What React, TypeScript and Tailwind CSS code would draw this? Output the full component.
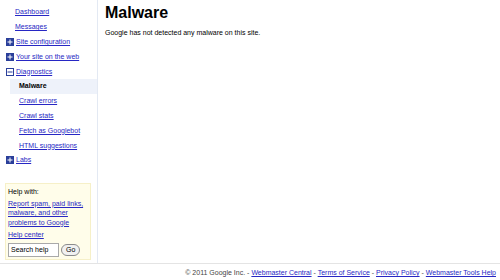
const navTop = [
  { label: "Dashboard" },
  { label: "Messages" },
];

const subItems = ["Crawl errors", "Crawl stats", "Fetch as Googlebot", "HTML suggestions"];

const BoxIcon = ({ open }: { open?: boolean }) => (
  <svg width="8" height="8" viewBox="0 0 8 8" className="shrink-0">
    <rect x="0.5" y="0.5" width="7" height="7" fill={open ? "#ffffff" : "#2a3f9a"} stroke="#2a3f9a" />
    <rect x="1.5" y="3.5" width="5" height="1" fill={open ? "#2a3f9a" : "#ffffff"} />
    {!open && <rect x="3.5" y="1.5" width="1" height="5" fill="#ffffff" />}
  </svg>
);

const Link = ({ children }: { children: React.ReactNode }) => (
  <a className="text-[#2727c4] underline">{children}</a>
);

const App = () => {
  return (
    <div className="w-[500px] h-[280px] bg-white flex flex-col text-[7px] leading-[10px] text-black font-['Liberation_Sans',Arial,sans-serif] overflow-hidden">
      <div className="flex h-[263px]">
        <div className="w-[98px] border-r border-[#e3e9f3] pt-[5px] flex flex-col">
          {navTop.map((n) => (
            <div key={n.label} className="h-[14.8px] flex items-center pl-[15px]">
              <Link>{n.label}</Link>
            </div>
          ))}
          <div className="h-[14.8px] flex items-center pl-[6px] gap-[2px]">
            <BoxIcon />
            <Link>Site configuration</Link>
          </div>
          <div className="h-[14.8px] flex items-center pl-[6px] gap-[2px]">
            <BoxIcon />
            <Link>Your site on the web</Link>
          </div>
          <div className="h-[14.8px] flex items-center pl-[6px] gap-[2px]">
            <BoxIcon open />
            <Link>Diagnostics</Link>
          </div>
          <div className="h-[14.8px] flex items-center ml-[10px] pl-[9px] bg-[#eef2fa] font-bold">
            Malware
          </div>
          {subItems.map((s) => (
            <div key={s} className="h-[14.8px] flex items-center pl-[19px]">
              <Link>{s}</Link>
            </div>
          ))}
          <div className="h-[14.8px] flex items-center pl-[6px] gap-[2px]">
            <BoxIcon />
            <Link>Labs</Link>
          </div>

          <div className="mt-[15px] ml-[5px] w-[86px] bg-[#fffdea] border border-[#f6f0c8] px-[2px] pt-[3px] pb-[2px]">
            <p className="mb-[2px]">Help with:</p>
            <p className="leading-[9.5px]">
              <Link>Report spam, paid links, malware, and other problems to Google</Link>
            </p>
            <p className="mt-[3px] leading-[9.5px]">
              <Link>Help center</Link>
            </p>
            <div className="flex items-center gap-[2px] mt-[3px]">
              <div className="w-[51px] h-[14px] bg-white border border-[#a9a9a9] flex items-center px-[2px] text-[7px]">
                Search help
              </div>
              <div className="h-[12px] px-[4px] rounded-full border border-[#8c8c8c] bg-[#f1f1f1] flex items-center">
                Go
              </div>
            </div>
          </div>
        </div>

        <div className="flex-1 pl-[7px] pt-[4px]">
          <h1 className="text-[16px] leading-[18px] font-bold">Malware</h1>
          <p className="mt-[6px]">Google has not detected any malware on this site.</p>
        </div>
      </div>

      <div className="border-t border-[#e4e4e4] flex-1 pt-[4px] pr-[4px] text-right text-[#444] whitespace-nowrap">
        © 2011 Google Inc. - <Link>Webmaster Central</Link> - <Link>Terms of Service</Link> -{" "}
        <Link>Privacy Policy</Link> - <Link>Webmaster Tools Help</Link>
      </div>
    </div>
  );
};

export default App;
